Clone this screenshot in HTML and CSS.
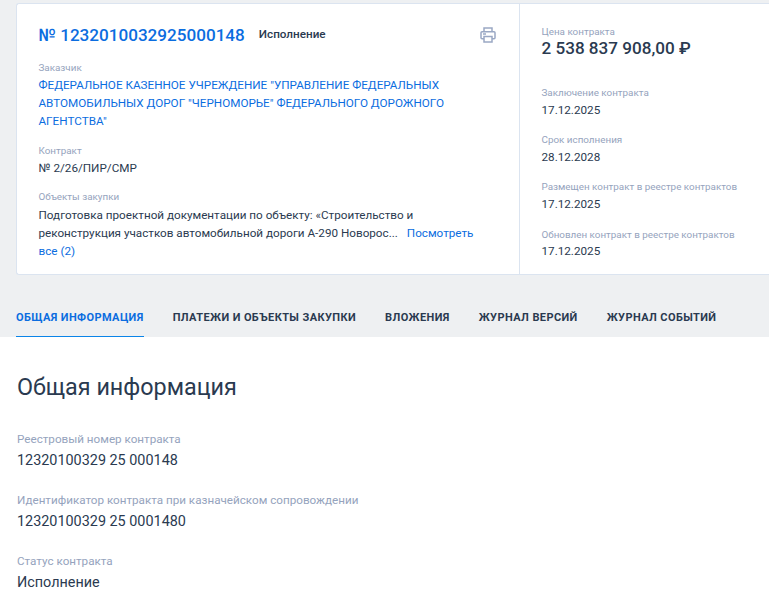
FILE: index.html
```html
<!DOCTYPE html>
<html lang="ru">
<head>
<meta charset="utf-8">
<title>Контракт</title>
<link rel="stylesheet" href="styles.css">
</head>
<body>
<div class="top">
  <section class="card">
    <div class="main">
      <div class="head">
        <a class="number">№ 1232010032925000148</a>
        <span class="status">Исполнение</span>
        <svg class="print" width="16" height="16" viewBox="0 0 16 16" fill="none" stroke="#9aa8c4" stroke-width="1.5">
          <path d="M4 4.5V1h8v3.5"/>
          <rect x="1" y="4.75" width="14" height="7" rx="1"/>
          <rect x="4" y="9.5" width="8" height="5.5" fill="#fff"/>
          <path d="M3 7h3"/>
        </svg>
      </div>
      <div class="field customer">
        <div class="label">Заказчик</div>
        <a class="link">ФЕДЕРАЛЬНОЕ КАЗЕННОЕ УЧРЕЖДЕНИЕ "УПРАВЛЕНИЕ ФЕДЕРАЛЬНЫХ АВТОМОБИЛЬНЫХ ДОРОГ "ЧЕРНОМОРЬЕ" ФЕДЕРАЛЬНОГО ДОРОЖНОГО АГЕНТСТВА"</a>
      </div>
      <div class="field contract">
        <div class="label">Контракт</div>
        <div class="value">№ 2/26/ПИР/СМР</div>
      </div>
      <div class="field objects">
        <div class="label">Объекты закупки</div>
        <div class="value">Подготовка проектной документации по объекту: «Строительство и реконструкция участков автомобильной дороги А-290 Новорос... <a class="link more">Посмотреть все (2)</a></div>
      </div>
    </div>
    <aside class="side">
      <div class="label">Цена контракта</div>
      <div class="price">2 538 837 908,00 ₽</div>
      <div class="fact first"><div class="label">Заключение контракта</div><div class="value">17.12.2025</div></div>
      <div class="fact"><div class="label">Срок исполнения</div><div class="value">28.12.2028</div></div>
      <div class="fact"><div class="label">Размещен контракт в реестре контрактов</div><div class="value">17.12.2025</div></div>
      <div class="fact"><div class="label">Обновлен контракт в реестре контрактов</div><div class="value">17.12.2025</div></div>
    </aside>
  </section>
  <nav class="tabs">
    <a class="tab active">ОБЩАЯ ИНФОРМАЦИЯ</a>
    <a class="tab">ПЛАТЕЖИ И ОБЪЕКТЫ ЗАКУПКИ</a>
    <a class="tab">ВЛОЖЕНИЯ</a>
    <a class="tab">ЖУРНАЛ ВЕРСИЙ</a>
    <a class="tab">ЖУРНАЛ СОБЫТИЙ</a>
  </nav>
</div>
<main class="content">
  <h1>Общая информация</h1>
  <div class="row"><div class="row-label">Реестровый номер контракта</div><div class="row-value">12320100329 25 000148</div></div>
  <div class="row"><div class="row-label">Идентификатор контракта при казначейском сопровождении</div><div class="row-value">12320100329 25 0001480</div></div>
  <div class="row"><div class="row-label">Статус контракта</div><div class="row-value">Исполнение</div></div>
</main>
</body>
</html>
```
FILE: styles.css
```css
html, body { margin: 0; padding: 0; }
html, body { height: 594px; overflow: hidden; }
body { font-family: Roboto, "Liberation Sans", sans-serif; color: #2a3a50; background: #fff; }
.top { background: #eef0f2; padding: 3px 0 0 16px; }
.card { display: flex; height: 270px; background: #fff; border: 1px solid #dbe4f0; border-right: 0; border-radius: 3px 0 0 3px; }
.main { flex: 0 0 503px; box-sizing: border-box; padding: 20px 23px 0 21.5px; border-right: 1px solid #dbe4f0; }
.head { display: flex; align-items: center; height: 22px; }
.number { font-size: 17.1px; font-weight: 500; color: #0b6de0; line-height: 22px; }
.status { font-size: 11.7px; font-weight: 500; color: #2a3a50; margin-left: 14px; margin-top: -2px; }
.print { margin-left: auto; margin-top: -1px; }
.label { font-size: 9.85px; line-height: 14px; color: #95a3bd; }
.value { font-size: 11.7px; line-height: 18px; color: #2a3a50; }
.link { font-size: 11.7px; line-height: 18px; color: #0b6de0; }
.more { margin-left: 6px; }
.field.customer { margin-top: 15px; }
.customer .link { display: block; margin-top: 1px; }
.field.contract { margin-top: 14px; }
.field.contract .value { margin-top: 1px; }
.field.objects { margin-top: 13px; }
.field.objects .value { margin-top: 2px; padding-right: 14px; }
.side { flex: 1; padding: 21px 0 0 21.5px; }
.price { font-size: 17.1px; font-weight: 500; line-height: 20px; color: #2a3a50; margin-top: -1px; }
.fact { margin-top: 14.3px; }
.fact .value { margin-top: .9px; }
.fact.first { margin-top: 28px; }
.tabs { display: flex; gap: 29px; margin-top: 25px; height: 37px; }
.tab { display: block; height: 36px; line-height: 35px; font-size: 11px; font-weight: 700; letter-spacing: .4px; color: #2a3a50; }
.tab.active { color: #0b6de0; border-bottom: 1px solid #0a84e8; }
.content { padding: 0 17px; }
h1 { margin: 33px 0 26.5px; font-size: 23.35px; line-height: 34px; font-weight: 400; color: #2a3a50; }
.row { margin-top: 21.5px; }
.row-label { font-size: 11.66px; line-height: 16px; color: #95a3bd; }
.row-value { font-size: 14.4px; line-height: 20px; margin-top: 4px; color: #2a3a50; }
.row:last-child { margin-top: 21.4px; }
.row:last-child .row-value { margin-top: 3.6px; }
```
